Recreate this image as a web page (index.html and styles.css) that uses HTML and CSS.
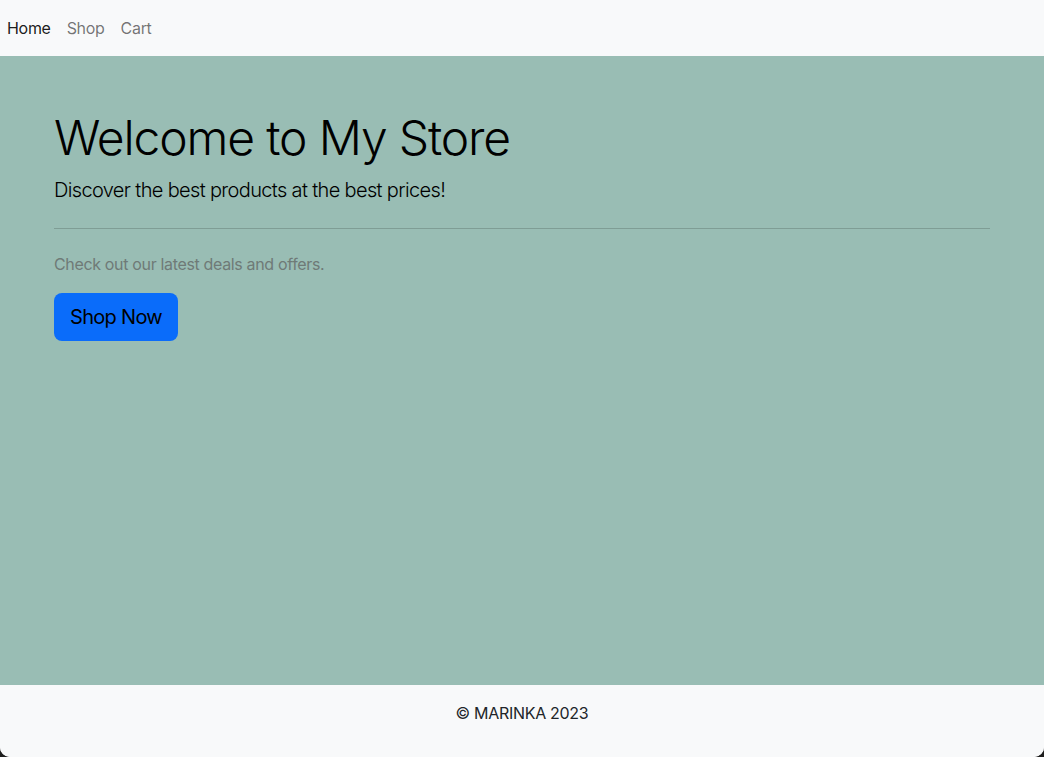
FILE: index.html
```html
<!DOCTYPE html>
<html lang="en">
<head>
<meta charset="utf-8">
<title>My Store</title>
<link rel="stylesheet" href="styles.css">
</head>
<body>
<nav class="navbar">
  <a class="nav-link active" href="#">Home</a>
  <a class="nav-link" href="#">Shop</a>
  <a class="nav-link" href="#">Cart</a>
</nav>
<main class="hero">
  <h1 class="hero-title">Welcome to My Store</h1>
  <p class="hero-lead">Discover the best products at the best prices!</p>
  <hr class="hero-rule">
  <p class="hero-text">Check out our latest deals and offers.</p>
  <a class="btn-shop" href="#">Shop Now</a>
</main>
<footer class="footer">© MARINKA 2023</footer>
</body>
</html>
```

FILE: styles.css
```css
html {
  background: #1e1e1e;
  height: 100%;
}
body {
  margin: 0;
  min-height: 100%;
  display: flex;
  flex-direction: column;
  font-family: "Inter", "Liberation Sans", sans-serif;
  font-size: 16px;
  line-height: 24px;
  letter-spacing: -0.3px;
  color: #212529;
  background: #f8f9fa;
  border-radius: 0 0 10px 10px;
  overflow: hidden;
  height: 757px;
}
.navbar {
  height: 56px;
  flex: 0 0 56px;
  display: flex;
  align-items: center;
  gap: 16px;
  padding-left: 7px;
  background: #f8f9fa;
}
.nav-link {
  text-decoration: none;
  color: rgba(0, 0, 0, 0.55);
}
.nav-link.active {
  color: rgba(0, 0, 0, 0.9);
}
.hero {
  flex: 1;
  background: #99bdb4;
  padding: 53px 54px 0;
  display: flex;
  flex-direction: column;
  align-items: flex-start;
}
.hero-title {
  margin: 0 0 8px;
  font-size: 48px;
  font-weight: 300;
  line-height: 57.6px;
  letter-spacing: -1.15px;
  color: #000;
}
.hero-lead {
  margin: 0;
  font-size: 20px;
  font-weight: 300;
  line-height: 30px;
  letter-spacing: -0.65px;
  color: #000;
}
.hero-rule {
  align-self: stretch;
  margin: 23px 0 0;
  border: 0;
  border-top: 1px solid rgba(0, 0, 0, 0.17);
  height: 0;
}
.hero-text {
  margin: 23px 0 0;
  letter-spacing: -0.34px;
  color: #6f7a77;
}
.btn-shop {
  margin-top: 17px;
  display: inline-block;
  padding: 9px 16px;
  font-size: 20px;
  line-height: 30px;
  letter-spacing: -0.7px;
  color: #000;
  background: #0a6cfa;
  border-radius: 8px;
  text-decoration: none;
}
.footer {
  flex: 0 0 72px;
  box-sizing: border-box;
  padding-top: 16px;
  text-align: center;
  background: #f8f9fa;
  color: #212529;
}
```
